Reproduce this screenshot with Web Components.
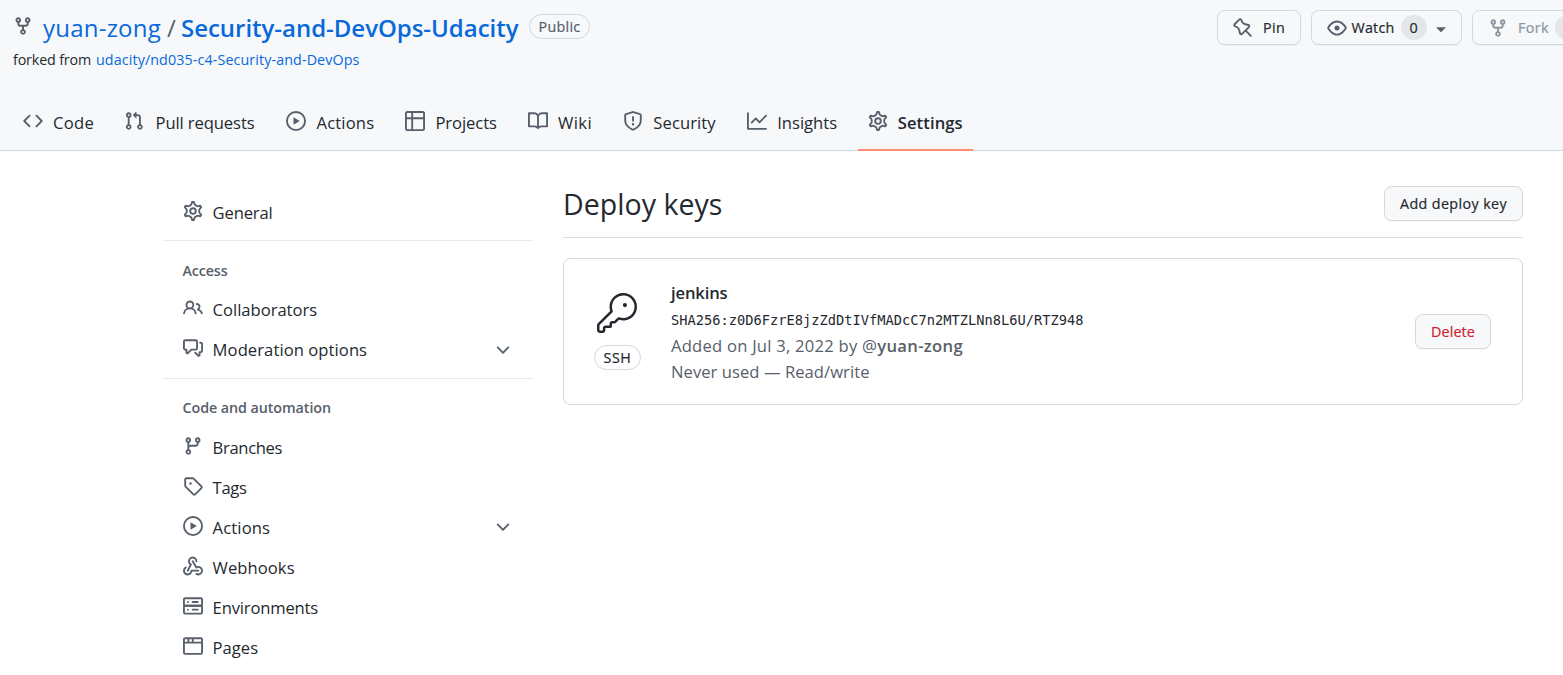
<!DOCTYPE html>
<html lang="en">
<head>
<meta charset="utf-8">
<title>Deploy keys</title>
<style>
html,body{margin:0;height:100%;overflow:hidden;background:#fff}
body{font-family:"Open Sans","Noto Sans",sans-serif;color:#24292f}
</style>
</head>
<body>
<settings-page></settings-page>
<script>
const P = (d, extra = '') => `<path fill-rule="evenodd" d="${d}"/>${extra}`;
const ICONS = {
fork:P('M5 3.25a.75.75 0 11-1.5 0 .75.75 0 011.5 0zm0 2.122a2.25 2.25 0 10-1.5 0v.878A2.25 2.25 0 005.75 8.5h1.5v2.128a2.251 2.251 0 101.5 0V8.5h1.5a2.25 2.25 0 002.25-2.25v-.878a2.25 2.25 0 10-1.5 0v.878a.75.75 0 01-.75.75h-4.5A.75.75 0 015 6.25v-.878zm3.75 7.378a.75.75 0 11-1.5 0 .75.75 0 011.5 0zm3-8.75a.75.75 0 100-1.5.75.75 0 000 1.5z'),
code:P('M4.72 3.22a.75.75 0 011.06 1.06L2.06 8l3.72 3.72a.75.75 0 11-1.06 1.06L.47 8.53a.75.75 0 010-1.06l4.25-4.25zm6.56 0a.75.75 0 10-1.06 1.06L13.94 8l-3.72 3.72a.75.75 0 101.06 1.06l4.25-4.25a.75.75 0 000-1.06l-4.25-4.25z'),
pull:P('M7.177 3.073L9.573.677A.25.25 0 0110 .854v4.792a.25.25 0 01-.427.177L7.177 3.427a.25.25 0 010-.354zM3.75 2.5a.75.75 0 100 1.5.75.75 0 000-1.5zm-2.25.75a2.25 2.25 0 113 2.122v5.256a2.251 2.251 0 11-1.5 0V5.372A2.25 2.25 0 011.5 3.25zM11 2.5h-1V4h1a1 1 0 011 1v5.628a2.251 2.251 0 101.5 0V5A2.5 2.5 0 0011 2.5zm1 10.25a.75.75 0 111.5 0 .75.75 0 01-1.5 0zM3.75 12a.75.75 0 100 1.5.75.75 0 000-1.5z'),
play:P('M1.5 8a6.5 6.5 0 1113 0 6.5 6.5 0 01-13 0zM8 0a8 8 0 100 16A8 8 0 008 0zM6.379 5.227A.25.25 0 006 5.442v5.117a.25.25 0 00.379.214l4.264-2.559a.25.25 0 000-.428L6.379 5.227z'),
table:P('M0 1.75C0 .784.784 0 1.75 0h12.5C15.216 0 16 .784 16 1.75v12.5A1.75 1.75 0 0114.25 16H1.75A1.75 1.75 0 010 14.25V1.75zM1.5 6.5v7.75c0 .138.112.25.25.25H5v-8H1.5zM5 5H1.5V1.75a.25.25 0 01.25-.25H5V5zm1.5 1.5v8h7.75a.25.25 0 00.25-.25V6.5h-8zm8-1.5h-8V1.5h7.75a.25.25 0 01.25.25V5z'),
book:P('M0 1.75A.75.75 0 01.75 1h4.253c1.227 0 2.317.59 3 1.501A3.744 3.744 0 0111.006 1h4.245a.75.75 0 01.75.75v10.5a.75.75 0 01-.75.75h-4.507a2.25 2.25 0 00-1.591.659l-.622.621a.75.75 0 01-1.06 0l-.622-.621A2.25 2.25 0 005.258 13H.75a.75.75 0 01-.75-.75V1.75zm8.755 3a2.25 2.25 0 012.25-2.25H14.5v9h-3.757c-.71 0-1.4.201-1.992.572l.004-7.322zm-1.504 7.324l.004-5.073-.002-2.253A2.25 2.25 0 005.003 2.5H1.5v9h3.757a3.75 3.75 0 011.994.574z'),
shield:P('M7.467.133a1.75 1.75 0 011.066 0l5.25 1.68A1.75 1.75 0 0115 3.48V7c0 1.566-.32 3.182-1.303 4.682-.983 1.498-2.585 2.813-5.032 3.855a1.7 1.7 0 01-1.33 0c-2.447-1.042-4.049-2.357-5.032-3.855C1.32 10.182 1 8.566 1 7V3.48a1.75 1.75 0 011.217-1.667l5.25-1.68zm.61 1.429a.25.25 0 00-.153 0l-5.25 1.68a.25.25 0 00-.174.238V7c0 1.358.275 2.666 1.057 3.86.784 1.194 2.121 2.34 4.366 3.297a.2.2 0 00.154 0c2.245-.956 3.582-2.104 4.366-3.298C13.225 9.666 13.5 8.36 13.5 7V3.48a.25.25 0 00-.174-.237l-5.25-1.68zM9 10.5a1 1 0 11-2 0 1 1 0 012 0zm-.25-5.75a.75.75 0 10-1.5 0v3a.75.75 0 001.5 0v-3z'),
graph:P('M1.5 1.75a.75.75 0 00-1.5 0v12.5c0 .414.336.75.75.75h14.5a.75.75 0 000-1.5H1.5V1.75zm14.28 2.53a.75.75 0 00-1.06-1.06L10 7.94 7.53 5.47a.75.75 0 00-1.06 0L3.22 8.72a.75.75 0 001.06 1.06L7 7.06l2.47 2.47a.75.75 0 001.06 0l5.25-5.25z'),
gear:`<g fill="none" stroke="currentColor" stroke-width="1.35"><path transform="translate(8 8) scale(1.11) translate(-8 -8)" d="M7.429 1.525a6.593 6.593 0 011.142 0c.036.003.108.036.137.146l.289 1.105c.147.56.55.967.997 1.189.174.086.341.183.501.29.417.278.97.423 1.53.27l1.102-.303c.11-.03.175.016.195.046.219.31.41.641.573.989.014.031.022.11-.059.19l-.815.806c-.411.406-.562.957-.53 1.456a4.588 4.588 0 010 .582c-.032.499.119 1.05.53 1.456l.815.806c.08.08.073.159.059.19a6.494 6.494 0 01-.573.99c-.02.029-.086.074-.195.045l-1.103-.303c-.559-.153-1.112-.008-1.529.27-.16.107-.327.204-.5.29-.449.222-.851.628-.998 1.189l-.289 1.105c-.029.11-.101.143-.137.146a6.613 6.613 0 01-1.142 0c-.036-.003-.108-.037-.137-.146l-.289-1.105c-.147-.56-.55-.967-.997-1.189a4.502 4.502 0 01-.501-.29c-.417-.278-.97-.423-1.53-.27l-1.102.303c-.11.03-.175-.016-.195-.046a6.492 6.492 0 01-.573-.989c-.014-.031-.022-.11.059-.19l.815-.806c.411-.406.562-.957.53-1.456a4.587 4.587 0 010-.582c.032-.499-.119-1.05-.53-1.456l-.815-.806c-.08-.08-.073-.159-.059-.19a6.44 6.44 0 01.573-.99c.02-.029.086-.075.195-.045l1.103.303c.559.153 1.112.008 1.529-.27.16-.107.327-.204.5-.29.449-.222.851-.628.998-1.189l.289-1.105c.029-.11.101-.143.137-.146z"/><circle cx="8" cy="8" r="2.25" stroke-width="1.5"/></g>`,
people:P('M5.5 3.5a2 2 0 100 4 2 2 0 000-4zM2 5.5a3.5 3.5 0 115.898 2.549 5.507 5.507 0 013.034 4.084.75.75 0 11-1.482.235 4.001 4.001 0 00-7.9 0 .75.75 0 01-1.482-.236A5.507 5.507 0 013.102 8.05 3.49 3.49 0 012 5.5zM11 4a.75.75 0 100 1.5 1.5 1.5 0 01.666 2.844.75.75 0 00-.416.672v.352a.75.75 0 00.574.73c1.2.289 2.162 1.2 2.522 2.372a.75.75 0 101.434-.44 5.01 5.01 0 00-2.56-3.012A3 3 0 0011 4z'),
comments:P('M1.5 2.75a.25.25 0 01.25-.25h8.5a.25.25 0 01.25.25v5.5a.25.25 0 01-.25.25h-3.5a.75.75 0 00-.53.22L3.5 11.44V9.25a.75.75 0 00-.75-.75h-1a.25.25 0 01-.25-.25v-5.5zM1.75 1A1.75 1.75 0 000 2.75v5.5C0 9.216.784 10 1.75 10H2v1.543a1.457 1.457 0 002.487 1.03L7.061 10h3.189A1.75 1.75 0 0012 8.25v-5.5A1.75 1.75 0 0010.25 1h-8.5zM14.5 4.75a.25.25 0 00-.25-.25h-.5a.75.75 0 110-1.5h.5c.966 0 1.75.784 1.75 1.75v5.5A1.75 1.75 0 0114.25 12H14v1.543a1.457 1.457 0 01-2.487 1.03L9.22 12.28a.75.75 0 111.06-1.06l2.22 2.22v-2.19a.75.75 0 01.75-.75h1a.25.25 0 00.25-.25v-5.5z'),
chevron:P('M12.78 6.22a.75.75 0 010 1.06l-4.25 4.25a.75.75 0 01-1.06 0L3.22 7.28a.75.75 0 011.06-1.06L8 9.94l3.72-3.72a.75.75 0 011.06 0z'),
branch:P('M11.75 2.5a.75.75 0 100 1.5.75.75 0 000-1.5zm-2.25.75a2.25 2.25 0 113 2.122V6A2.5 2.5 0 0110 8.5H6a1 1 0 00-1 1v1.128a2.251 2.251 0 11-1.5 0V5.372a2.25 2.25 0 111.5 0v1.836A2.492 2.492 0 016 7h4a1 1 0 001-1v-.628A2.25 2.25 0 019.5 3.25zM4.25 12a.75.75 0 100 1.5.75.75 0 000-1.5zM3.5 3.25a.75.75 0 111.5 0 .75.75 0 01-1.5 0z'),
tag:P('M2.5 7.775V2.75a.25.25 0 01.25-.25h5.025a.25.25 0 01.177.073l6.25 6.25a.25.25 0 010 .354l-5.025 5.025a.25.25 0 01-.354 0l-6.25-6.25a.25.25 0 01-.073-.177zm-1.5 0V2.75C1 1.784 1.784 1 2.75 1h5.025c.464 0 .91.184 1.238.513l6.25 6.25a1.75 1.75 0 010 2.474l-5.026 5.026a1.75 1.75 0 01-2.474 0l-6.25-6.25A1.75 1.75 0 011 7.775zM6 5a1 1 0 100 2 1 1 0 000-2z'),
webhook:'<path d="M5.5 4.25a2.25 2.25 0 014.5 0 .75.75 0 001.5 0 3.75 3.75 0 10-6.14 2.889l-2.272 4.258a.75.75 0 001.324.706L7 7.25a.75.75 0 00-.309-1.015A2.25 2.25 0 015.5 4.25z"/><path d="M7.364 3.607a.75.75 0 011.03.257l2.608 4.349a3.75 3.75 0 11-.628 6.785.75.75 0 01.752-1.299 2.25 2.25 0 10-.033-3.88.75.75 0 01-1.03-.256L7.107 4.636a.75.75 0 01.257-1.03z"/><path d="M2.9 8.776A.75.75 0 012.625 9.8 2.25 2.25 0 106 11.75a.75.75 0 01.75-.751h5.5a.75.75 0 010 1.5H7.425a3.751 3.751 0 11-5.55-3.998.75.75 0 011.024.274z"/>',
server:'<g fill="none" stroke="currentColor" stroke-width="1.5"><rect x=".75" y="1.75" width="14.5" height="6" rx="1"/><rect x=".75" y="7.75" width="14.5" height="6.3" rx="1"/><path stroke-linecap="round" d="M7.75 4.75h4M7.75 10.9h4M4 4.75h.01M4 10.9h.01"/></g>',
browser:'<g fill="none" stroke="currentColor" stroke-width="1.5"><rect x=".75" y="1.75" width="14.5" height="12.5" rx="1"/><path d="M1 5.25h14M4.3 2v3M7.8 2v3"/></g>',
pin:P('M4.456.734a1.75 1.75 0 012.826.504l.613 1.327a3.081 3.081 0 002.084 1.707l2.454.584c1.332.317 1.8 1.972.832 2.94L11.06 10l3.72 3.72a.75.75 0 11-1.061 1.06L10 11.06l-2.204 2.205c-.968.968-2.623.5-2.94-.832l-.584-2.454a3.081 3.081 0 00-1.707-2.084l-1.327-.613a1.75 1.75 0 01-.504-2.826L4.456.734zM5.92 1.866a.25.25 0 00-.404-.072L1.794 5.516a.25.25 0 00.072.404l1.328.613A4.582 4.582 0 015.73 9.63l.584 2.454a.25.25 0 00.42.12l5.47-5.47a.25.25 0 00-.12-.42L9.63 5.73a4.581 4.581 0 01-3.098-2.537L5.92 1.866z'),
eye:P('M1.679 7.932c.412-.621 1.242-1.75 2.366-2.717C5.175 4.242 6.527 3.5 8 3.5c1.473 0 2.824.742 3.955 1.715 1.124.967 1.954 2.096 2.366 2.717a.119.119 0 010 .136c-.412.621-1.242 1.75-2.366 2.717C10.825 11.758 9.473 12.5 8 12.5c-1.473 0-2.824-.742-3.955-1.715C2.92 9.818 2.09 8.69 1.679 8.068a.119.119 0 010-.136zM8 2c-1.981 0-3.67.992-4.933 2.078C1.797 5.169.88 6.423.43 7.1a1.619 1.619 0 000 1.798c.45.678 1.367 1.932 2.637 3.024C4.329 13.008 6.019 14 8 14c1.981 0 3.67-.992 4.933-2.078 1.27-1.091 2.187-2.345 2.637-3.023a1.619 1.619 0 000-1.798c-.45-.678-1.367-1.932-2.637-3.023C11.671 2.992 9.981 2 8 2zm0 8a2 2 0 100-4 2 2 0 000 4z'),
caret:'<path d="M4 6.5h8L8 10.5z"/>',
key:'<g transform="scale(.66667)"><circle cx="16.75" cy="7.25" r="1.25"/><path fill-rule="evenodd" d="M15.75 0a8.25 8.25 0 00-7.851 10.79L.513 18.178A1.75 1.75 0 000 19.414v2.836C0 23.217.784 24 1.75 24h1.5A1.75 1.75 0 005 22.25v-1a.25.25 0 01.25-.25h2.735a.75.75 0 00.545-.22l.214-.213A.875.875 0 009 19.948V18.5a.25.25 0 01.25-.25h1.086c.464 0 .91-.184 1.237-.513l1.636-1.636A8.25 8.25 0 1015.75 0zM9 8.25a6.75 6.75 0 114.288 6.287.75.75 0 00-.804.168l-1.971 1.972a.25.25 0 01-.177.073H9.25A1.75 1.75 0 007.5 18.5v1H5.25a1.75 1.75 0 00-1.75 1.75v1a.25.25 0 01-.25.25h-1.5a.25.25 0 01-.25-.25v-2.836a.25.25 0 01.073-.177l7.722-7.721a.75.75 0 00.168-.804A6.73 6.73 0 019 8.25z"/></g>'
};

function define(name, html, init) {
  const t = document.createElement('template');
  customElements.define(name, class extends HTMLElement {
    connectedCallback() {
      if (this.shadowRoot) return;
      t.innerHTML = typeof html === 'function' ? html(this) : html;
      this.attachShadow({ mode: 'open' }).append(t.content.cloneNode(true));
      if (init) init(this);
    }
  });
}

/* A 16-unit glyph; size in px. */
define('octo-icon', el => {
  const s = el.getAttribute('size') || 20;
  return `<style>:host{display:block;flex:none;width:${s}px;height:${s}px}svg{display:block;fill:currentColor;overflow:visible}</style>
  <svg width="${s}" height="${s}" viewBox="0 0 16 16">${ICONS[el.getAttribute('name')]}</svg>`;
});

/* One line of text whose tracking is tuned so that it occupies w px. */
define('fit-text', el => `<style>:host{display:block;flex:none;white-space:pre;width:${el.getAttribute('w')}px}span{display:inline-block}</style><span><slot></slot></span>`,
  el => {
    const span = el.shadowRoot.querySelector('span');
    const w = +el.getAttribute('w');
    const natural = span.getBoundingClientRect().width;
    if (natural) span.style.letterSpacing = ((w - natural) / el.textContent.length) + 'px';
  });

define('ui-button', `<style>
:host{display:flex;flex:none;box-sizing:border-box;height:35px;align-items:center;padding:0 15px;border:1px solid #d5d8da;border-radius:7.5px;background:#f6f8fa;box-shadow:0 1px 0 rgba(27,31,36,.04);font-size:14.3px;font-weight:500;line-height:24px;color:#24292f;-webkit-text-stroke:.2px currentColor}
</style><slot></slot>`);

define('count-badge', `<style>:host{display:flex;flex:none;width:26px;height:25px;border-radius:13px;background:#e4e6e8;align-items:center;justify-content:center;font-size:14.3px}</style><slot></slot>`);

define('pill-label', `<style>:host{display:flex;flex:none;box-sizing:border-box;height:25px;align-items:center;justify-content:center;border:1px solid #d0d7de;border-radius:13px;font-size:14.3px;font-weight:500;line-height:23px;-webkit-text-stroke:.2px currentColor}</style><slot></slot>`);

define('nav-tab', el => `<style>
:host{display:flex;flex:none;box-sizing:border-box;height:60px;padding:0 10px;gap:10px;border-bottom:2px solid transparent;font-size:16.6px;line-height:24px}
:host([selected]){border-bottom-color:#fd8c73;font-weight:600}
octo-icon{margin-top:20px;color:#57606a}fit-text{margin:20px ${el.getAttribute('inset') || 0}px 0}
</style><octo-icon name="${el.getAttribute('icon')}"></octo-icon><fit-text w="${el.getAttribute('w')}">${el.getAttribute('label')}</fit-text>`);

define('side-item', el => `<style>
:host{display:flex;height:40px;padding:0 20px;gap:10px;font-size:16.6px;line-height:24px}
octo-icon{margin-top:8px;color:#57606a}fit-text{margin:8px 0 0 -.4px}
octo-icon.c{margin:var(--chevron-top,9px) 0 0 auto}
</style><octo-icon name="${el.getAttribute('icon')}"></octo-icon><fit-text w="${el.getAttribute('w')}">${el.getAttribute('label')}</fit-text>
${el.hasAttribute('expandable') ? '<octo-icon class="c" name="chevron"></octo-icon>' : ''}`);

define('side-group', `<style>
:host{display:block;border-top:1px solid #e6e8eb}
.h{padding:var(--title-top,19px) 20px 0 19.5px;height:calc(49px - var(--title-top,19px));font-size:14.3px;font-weight:600;line-height:22px;color:#57606a}
</style><div class="h"><slot name="title"></slot></div><slot></slot>`);

define('repo-header', `<style>
:host{display:block;box-sizing:border-box;height:151px;background:#f6f8fa;border-bottom:1px solid #d0d7de}
.top{display:flex;height:91px;align-items:flex-start}
.id{flex:1;padding-left:13px}
.name{display:flex;align-items:flex-start;height:48px;font-size:24px;line-height:34px;color:#0969da}
.name octo-icon{margin:16px 10px 0 0;color:#57606a}
.name fit-text{margin-top:11px}
.name .s{color:#57606a;margin-left:6px;margin-right:5px}
.name b{font-weight:600}
pill-label{margin:14px 0 0 10px;width:61px;color:#57606a}
pill-label fit-text{margin:0!important}
.from{display:flex;gap:5px;font-size:14.3px;line-height:22px;padding-top:1px}
.from .l{color:#0969da}
.btns{display:flex;gap:10px;padding-top:10px;height:40px;width:346px;overflow:hidden}
ui-button octo-icon{color:#57606a}
nav{display:flex;gap:10px;padding:0 13px}
</style>
<div class="top"><div class="id"><div class="name"><octo-icon name="fork"></octo-icon><fit-text w="118">yuan-zong</fit-text><fit-text class="s" w="9">/</fit-text><fit-text w="337.5"><b>Security-and-DevOps-Udacity</b></fit-text><pill-label style="margin-left:10.5px"><fit-text w="42">Public</fit-text></pill-label></div>
<div class="from"><fit-text w="78">forked from</fit-text><fit-text class="l" w="263.5">udacity/nd035-c4-Security-and-DevOps</fit-text></div></div>
<div class="btns"><ui-button><octo-icon name="pin"></octo-icon><fit-text w="22" style="margin-left:10px">Pin</fit-text></ui-button>
<ui-button><octo-icon name="eye"></octo-icon><fit-text w="43" style="margin-left:4.5px">Watch</fit-text><count-badge style="margin-left:6px">0</count-badge><octo-icon name="caret" style="margin:2px -5px 0 4.5px"></octo-icon></ui-button>
<ui-button style="width:120px;color:#8c959f"><octo-icon name="fork" style="color:#8c959f"></octo-icon><fit-text w="31" style="margin-left:10px">Fork</fit-text><count-badge style="margin-left:6px"></count-badge></ui-button></div></div>
<nav>
<nav-tab icon="code" w="41" label="Code"></nav-tab><nav-tab icon="pull" w="99" inset="1.5" label="Pull requests"></nav-tab><nav-tab icon="play" w="57.6" inset=".6" label="Actions"></nav-tab><nav-tab icon="table" w="61.6" inset=".6" label="Projects"></nav-tab><nav-tab icon="book" w="34" inset=".5" label="Wiki"></nav-tab><nav-tab icon="shield" w="62.4" inset=".8" label="Security"></nav-tab><nav-tab icon="graph" w="60" inset=".6" label="Insights"></nav-tab><nav-tab icon="gear" w="65" label="Settings" selected></nav-tab>
</nav>`);

define('settings-sidebar', `<style>:host{display:block;flex:none;width:370px;padding-top:42px}
.g{height:47px}.a{height:137px}.b{--title-top:18px;--chevron-top:8px}</style>
<div class="g"><side-item icon="gear" w="60" label="General"></side-item></div>
<side-group class="a"><fit-text slot="title" w="45">Access</fit-text>
<side-item icon="people" w="104.5" label="Collaborators"></side-item><side-item icon="comments" w="154.5" label="Moderation options" expandable></side-item></side-group>
<side-group class="b"><fit-text slot="title" w="148.5">Code and automation</fit-text>
<side-item icon="branch" w="69.5" label="Branches"></side-item><side-item icon="tag" w="34" label="Tags"></side-item><side-item icon="play" w="57.5" label="Actions" expandable></side-item><side-item icon="webhook" w="82" label="Webhooks"></side-item><side-item icon="server" w="105.5" label="Environments"></side-item><side-item icon="browser" w="45.5" label="Pages"></side-item></side-group>`);

define('deploy-key', `<style>
:host{display:flex;box-sizing:border-box;height:147px;margin-top:20px;padding:0 31px 0 30px;border:1px solid #d0d7de;border-radius:7.5px}
.i{display:flex;flex-direction:column;align-items:center;width:47px;padding-top:34px}
.i octo-icon{margin-right:2px}
pill-label{width:47px;margin-top:12px}
.t{flex:1;padding:21px 0 0 30px;font-size:16.6px;line-height:26px;color:#57606a}
.n{font-weight:600;color:#24292f}
.m{font:13.7px/26px "DejaVu Sans Mono","Liberation Mono",monospace;color:#24292f;margin-top:1px}
.r{display:flex}.n,.r,.m{height:26px}b{font-weight:600}
ui-button{align-self:center;color:#cf222e}
</style>
<div class="i"><octo-icon name="key" size="40"></octo-icon><pill-label><fit-text w="28">SSH</fit-text></pill-label></div>
<div class="t"><div class="n"><fit-text w="56.5">jenkins</fit-text></div><div class="m"><fit-text w="412.5">SHA256:z0D6FzrE8jzZdDtIVfMADcC7n2MTZLNn8L6U/RTZ948</fit-text></div>
<div class="r"><fit-text w="191">Added on Jul 3, 2022 by </fit-text><fit-text w="101">@<b>yuan-zong</b></fit-text></div><div class="r"><fit-text w="198.5">Never used — Read/write</fit-text></div></div>
<ui-button><fit-text w="44">Delete</fit-text></ui-button>`);

define('settings-page', `<style>
:host{display:block;width:1563px;height:675px;overflow:hidden;background:#fff}
.body{display:flex;gap:30px;padding:0 40px 0 163px}
main{flex:1;padding-top:35px}
.head{display:flex;justify-content:space-between;height:51px;border-bottom:1px solid #d8dee4}
h2{margin:-3px 0 0;font-size:28.5px;font-weight:400;line-height:42px}
</style>
<repo-header></repo-header>
<div class="body"><settings-sidebar></settings-sidebar>
<main><div class="head"><h2><fit-text w="159.5">Deploy keys</fit-text></h2><ui-button><fit-text w="107">Add deploy key</fit-text></ui-button></div>
<deploy-key></deploy-key></main></div>`);
</script>
</body>
</html>
